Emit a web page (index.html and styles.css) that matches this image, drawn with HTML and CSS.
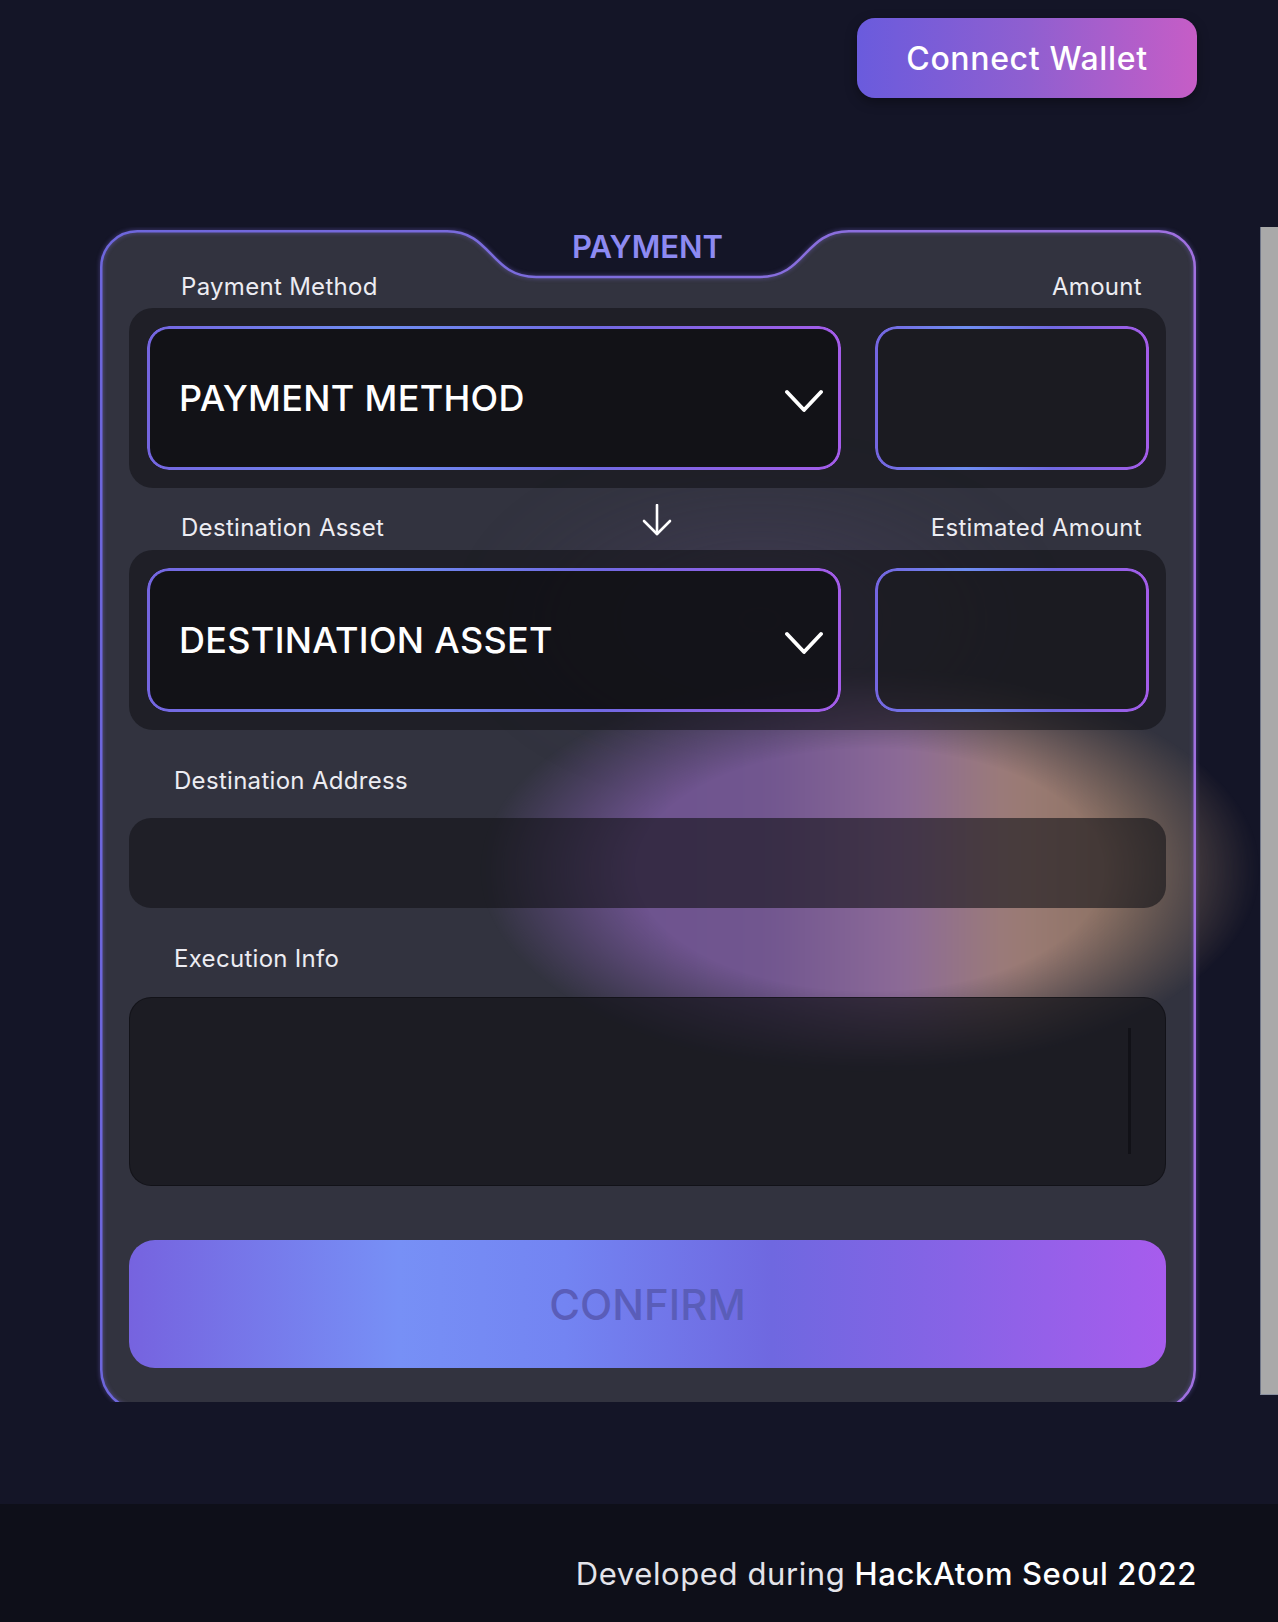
FILE: index.html
```html
<!DOCTYPE html>
<html lang="en">
<head>
<meta charset="utf-8">
<title>Payment</title>
<link rel="stylesheet" href="styles.css">
</head>
<body>
<header class="topbar">
  <button class="connect-btn" type="button">Connect Wallet</button>
</header>

<main class="viewport">
  <div class="scroll-area">
    <section class="card">
      <svg class="card-shape" viewBox="0 0 1096 1181" width="1096" height="1181" aria-hidden="true">
        <path class="card-fill" d="M1.25,37.25 A36,36 0 0 1 37.25,1.25 L347,1.25 C392,1.25 390,47 436,47 L660,47 C706,47 704,1.25 749,1.25 L1058.75,1.25 A36,36 0 0 1 1094.75,37.25 L1094.75,1139.75 A40,40 0 0 1 1054.75,1179.75 L41.25,1179.75 A40,40 0 0 1 1.25,1139.75 Z"/>
      </svg>
      <div class="card-haze"></div>
      <div class="card-glow"></div>
      <svg class="card-shape card-outline" viewBox="0 0 1096 1181" width="1096" height="1181" aria-hidden="true">
        <defs>
          <linearGradient id="cardStroke" x1="0" y1="0" x2="1" y2="0">
            <stop offset="0" stop-color="#6d66dc"/>
            <stop offset="0.5" stop-color="#7f6ddc"/>
            <stop offset="1" stop-color="#a070e0"/>
          </linearGradient>
        </defs>
        <path class="card-stroke" d="M1.25,37.25 A36,36 0 0 1 37.25,1.25 L347,1.25 C392,1.25 390,47 436,47 L660,47 C706,47 704,1.25 749,1.25 L1058.75,1.25 A36,36 0 0 1 1094.75,37.25 L1094.75,1139.75 A40,40 0 0 1 1054.75,1179.75 L41.25,1179.75 A40,40 0 0 1 1.25,1139.75 Z"/>
      </svg>

      <div class="card-content">
        <h1 class="card-title">PAYMENT</h1>

        <div class="label-row">
          <span>Payment Method</span>
          <span>Amount</span>
        </div>
        <div class="field-row">
          <div class="select">
            <span class="select-text">PAYMENT METHOD</span>
            <svg class="chevron" viewBox="0 0 38 24" width="38" height="24" aria-hidden="true"><polyline points="2,3 19,21 36,3"/></svg>
          </div>
          <div class="amount-box"></div>
        </div>

        <div class="label-row label-row--arrow">
          <span>Destination Asset</span>
          <svg class="arrow-down" viewBox="0 0 30 32" width="30" height="32" aria-hidden="true"><line x1="15" y1="1" x2="15" y2="30"/><polyline points="2,17 15,30 28,17"/></svg>
          <span>Estimated Amount</span>
        </div>
        <div class="field-row field-row--second">
          <div class="select">
            <span class="select-text">DESTINATION ASSET</span>
            <svg class="chevron" viewBox="0 0 38 24" width="38" height="24" aria-hidden="true"><polyline points="2,3 19,21 36,3"/></svg>
          </div>
          <div class="amount-box"></div>
        </div>

        <div class="field-label">Destination Address</div>
        <div class="address-input"></div>

        <div class="field-label">Execution Info</div>
        <div class="exec-box"><div class="exec-scroll"></div></div>

        <button class="confirm-btn" type="button">CONFIRM</button>
      </div>
    </section>
  </div>
  <div class="fake-scrollbar"></div>
</main>

<footer class="footer">
  <p class="footer-text">Developed during <strong>HackAtom Seoul 2022</strong></p>
</footer>
</body>
</html>
```

FILE: styles.css
```css
* { box-sizing: border-box; }

html, body {
  margin: 0;
  padding: 0;
}

body {
  width: 1278px;
  background: #141527;
  font-family: Inter, "Noto Sans", sans-serif;
  color: #ffffff;
}

/* ---------- top bar ---------- */
.topbar {
  height: 227px;
  padding: 18px 81px 0 0;
  display: flex;
  justify-content: flex-end;
  align-items: flex-start;
}

.connect-btn {
  width: 340px;
  height: 80px;
  border: 0;
  border-radius: 18px;
  background: linear-gradient(90deg, #6a5bdd 0%, #8f5fd0 50%, #c65dc6 100%);
  color: #ffffff;
  font-family: Inter, "Noto Sans", sans-serif;
  font-size: 32px;
  font-weight: 500;
  letter-spacing: 0.65px;
  box-shadow: 0 4px 12px rgba(0, 0, 0, 0.35);
  cursor: pointer;
}

/* ---------- main scroll viewport ---------- */
.viewport {
  height: 1175px;
  display: flex;
  overflow: hidden;
}

.scroll-area {
  flex: 1;
  min-width: 0;
  padding: 3px 0 0 100px;
}

.fake-scrollbar {
  width: 18px;
  height: 1168px;
  background: #a9a9a9;
  border-left: 1px solid #6f7688;
  border-bottom: 1px solid #8a90a0;
}

/* ---------- card ---------- */
.card {
  position: relative;
  width: 1096px;
  height: 1181px;
}

.card-shape {
  position: absolute;
  left: 0;
  top: 0;
  overflow: visible;
}

.card-fill {
  fill: #32333f;
}

.card-stroke {
  fill: none;
  stroke: url(#cardStroke);
  stroke-width: 2.5;
}

.card-outline {
  filter: drop-shadow(0 0 2px rgba(130, 110, 230, 0.55));
}

.card-haze {
  position: absolute;
  left: 380px;
  top: 240px;
  width: 560px;
  height: 300px;
  filter: blur(30px);
  background: radial-gradient(ellipse 50% 50% at 50% 50%, rgba(95, 75, 125, 0.35) 0%, rgba(95, 75, 125, 0) 100%);
}

.card-glow {
  position: absolute;
  left: 380px;
  top: 438px;
  width: 780px;
  height: 404px;
  filter: blur(16px);
  background: linear-gradient(90deg,
    #6a5090 0%,
    #71568f 37%,
    #8c6a98 54%,
    #9c7c76 68%,
    #8a7060 84%,
    #6a5a50 100%);
  -webkit-mask-image: radial-gradient(ellipse 50% 50% at 50% 50%, #000 60%, transparent 100%);
  mask-image: radial-gradient(ellipse 50% 50% at 50% 50%, #000 60%, transparent 100%);
}

.card-content {
  position: relative;
  z-index: 1;
  padding: 0 30px 0 29px;
  display: flex;
  flex-direction: column;
}

.card-title {
  margin: 0;
  height: 34px;
  line-height: 34px;
  text-align: center;
  font-size: 31px;
  font-weight: 600;
  color: #8d8af2;
}

/* ---------- labels ---------- */
.label-row {
  margin-top: 9px;
  padding: 0 24px 0 52px;
  display: flex;
  justify-content: space-between;
  font-size: 24px;
  line-height: 28px;
  letter-spacing: 0.3px;
  color: #ececf2;
}

.label-row--arrow {
  margin-top: 16px;
  height: 38px;
  align-items: flex-end;
}

.arrow-down {
  align-self: flex-start;
  fill: none;
  stroke: #ffffff;
  stroke-width: 2.6;
  stroke-linecap: round;
  stroke-linejoin: round;
}

.field-label {
  margin-top: 37px;
  padding-left: 45px;
  font-size: 24px;
  line-height: 28px;
  letter-spacing: 0.3px;
  color: #ececf2;
}

/* ---------- rows ---------- */
.field-row {
  margin-top: 7px;
  height: 180px;
  padding: 18px 17px 18px 18px;
  display: flex;
  gap: 34px;
  border-radius: 24px;
  background: rgba(18, 18, 24, 0.6);
}

.field-row--second {
  margin-top: 8px;
}

.select,
.amount-box {
  position: relative;
  border-radius: 22px;
}

.select::before,
.amount-box::before {
  content: "";
  position: absolute;
  inset: 0;
  border-radius: inherit;
  padding: 3px;
  background: linear-gradient(90deg, #7465e0 0%, #6f8ef2 33%, #7169e2 65%, #a45ce9 100%);
  -webkit-mask: linear-gradient(#000 0 0) content-box, linear-gradient(#000 0 0);
  -webkit-mask-composite: xor;
  mask-composite: exclude;
}

.select {
  width: 694px;
  display: flex;
  align-items: center;
  justify-content: space-between;
  padding: 0 18px 0 32px;
  background: rgba(14, 14, 18, 0.72);
}

.select-text {
  font-size: 36px;
  font-weight: 500;
  letter-spacing: 0.3px;
  color: #ffffff;
}

.chevron {
  margin-top: 6px;
  fill: none;
  stroke: #ffffff;
  stroke-width: 3.8;
  stroke-linecap: round;
  stroke-linejoin: round;
}

.amount-box {
  width: 274px;
  background: rgba(24, 24, 28, 0.5);
}

.address-input {
  margin-top: 23px;
  height: 90px;
  border-radius: 22px;
  background: rgba(18, 18, 24, 0.6);
}

.exec-box {
  margin-top: 24px;
  height: 189px;
  padding: 30px 34px 31px 0;
  display: flex;
  justify-content: flex-end;
  border: 1px solid rgba(12, 12, 16, 0.55);
  border-radius: 22px;
  background: rgba(18, 18, 24, 0.7);
}

.exec-scroll {
  width: 3px;
  background: rgba(10, 10, 14, 0.55);
}

.confirm-btn {
  margin-top: 54px;
  height: 128px;
  border: 0;
  border-radius: 26px;
  background: linear-gradient(90deg, #7663df 0%, #7790f6 26%, #7384f2 42%, #6f68e0 62%, #8863e6 80%, #a75ced 100%);
  font-family: Inter, "Noto Sans", sans-serif;
  font-size: 42px;
  font-weight: 500;
  color: #5a5db9;
  cursor: pointer;
}

/* ---------- footer ---------- */
.footer {
  margin-top: 102px;
  height: 118px;
  padding: 22px 81px 0 0;
  display: flex;
  justify-content: flex-end;
  align-items: center;
  background: #0e0f19;
}

.footer-text {
  margin: 0;
  font-size: 31px;
  line-height: 36px;
  letter-spacing: 0.6px;
  color: #e4e4ea;
}

.footer-text strong {
  font-weight: 500;
  color: #ffffff;
}
```
